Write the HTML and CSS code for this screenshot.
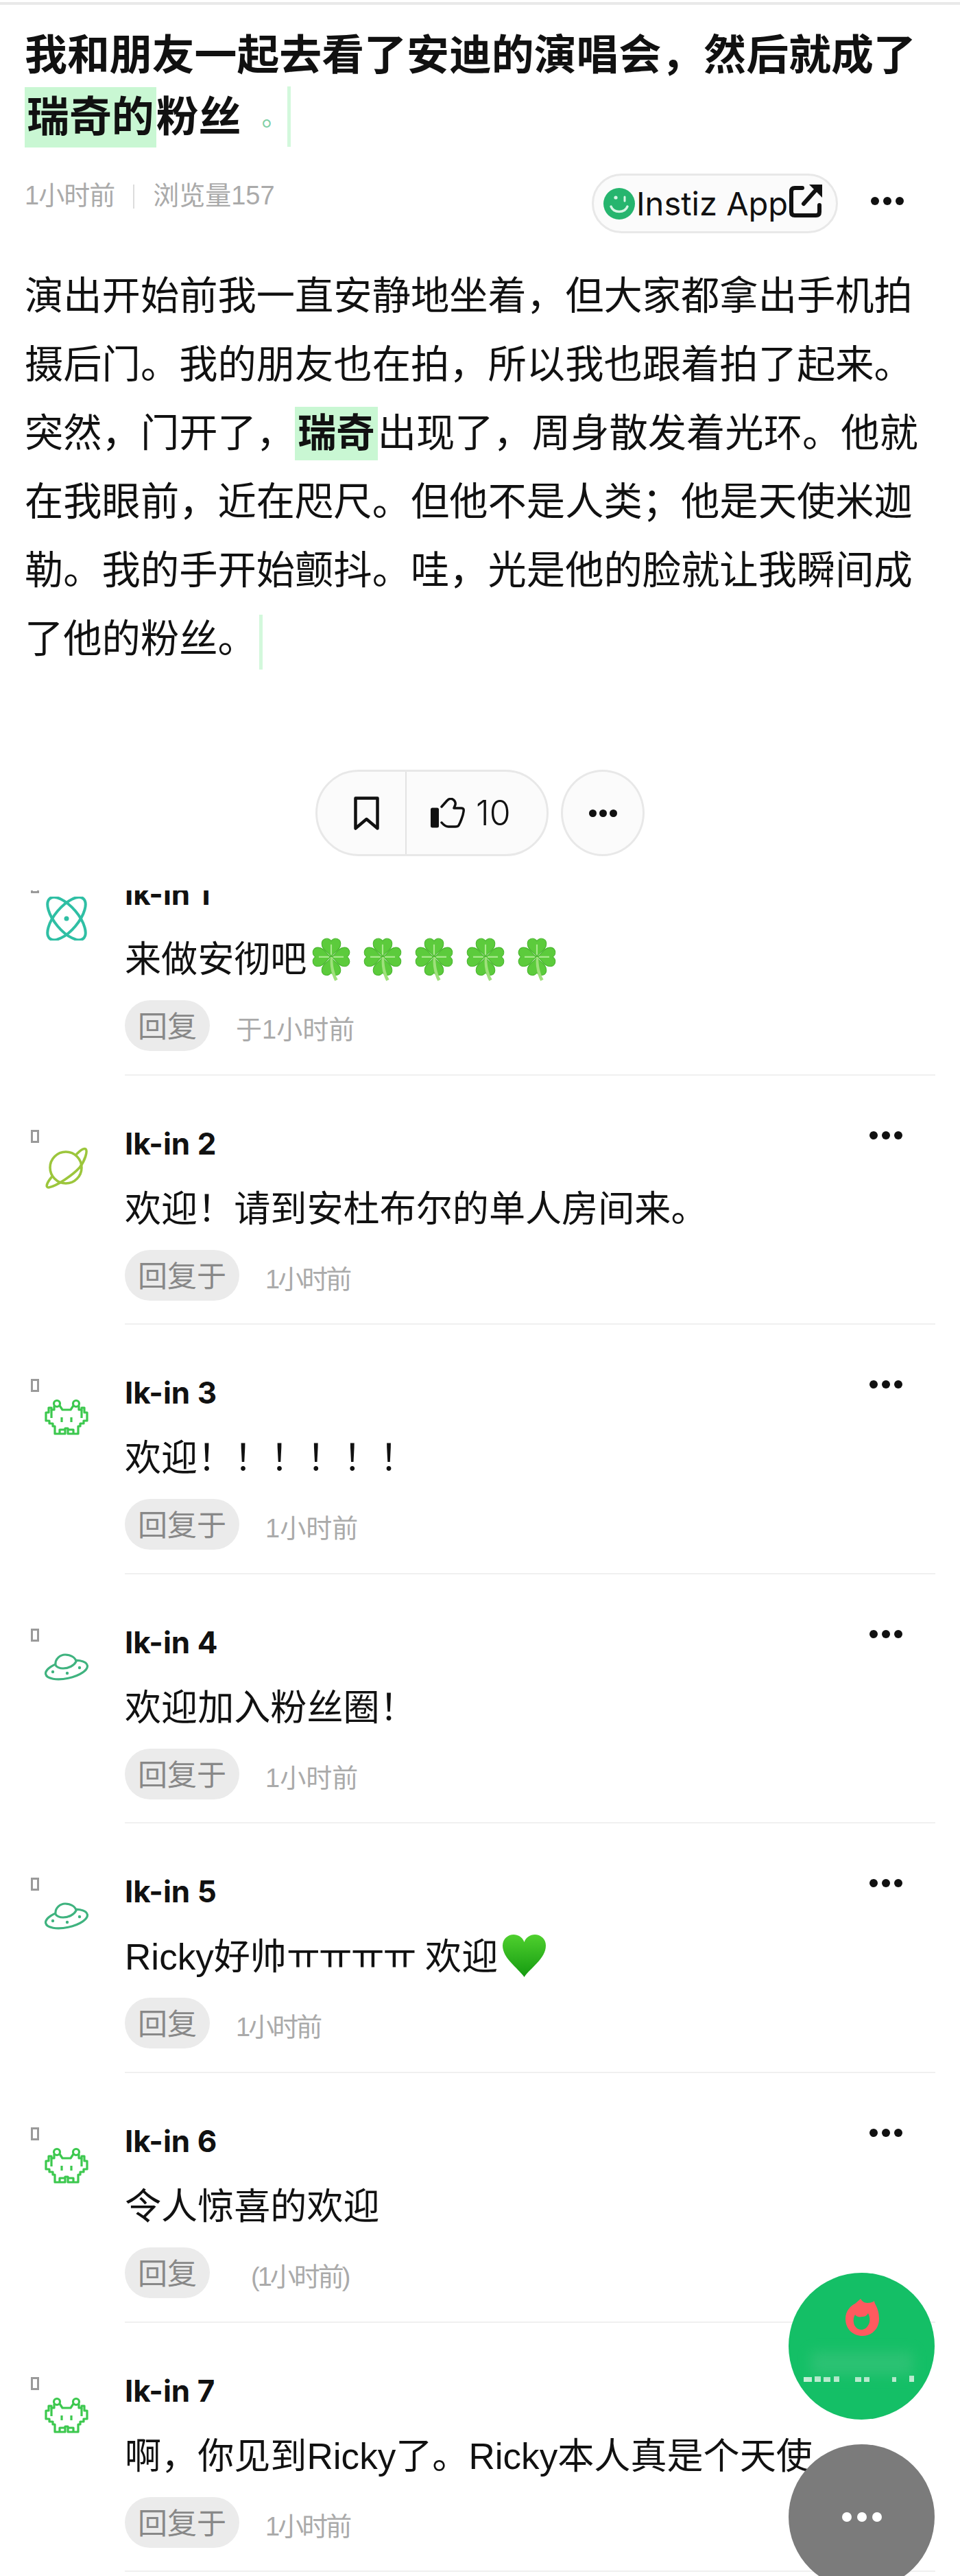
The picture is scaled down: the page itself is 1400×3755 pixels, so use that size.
FILE: index.html
```html
<!DOCTYPE html>
<html lang="zh-CN">
<head>
  <meta charset="UTF-8" />
  <title>我和朋友一起去看了安迪的演唱会</title>
  <link rel="stylesheet" href="styles.css">
</head>
<body>
  <!-- shared icons -->
  <svg class="defs" aria-hidden="true">
    <defs>
      <linearGradient id="heartGrad" x1="0" y1="0" x2="0" y2="1">
        <stop offset="0" stop-color="#4fd02e"/>
        <stop offset="1" stop-color="#149a10"/>
      </linearGradient>
      <path id="leaf" d="M30 31 C28 25 17 22 17 13 C17 6 25 3 30 9 C35 3 43 6 43 13 C43 22 32 25 30 31Z"/>
    </defs>
    <symbol id="clover" viewBox="0 0 60 65">
      <g fill="#5ccb3c" stroke="#48b52e" stroke-width="1">
        <use href="#leaf"/>
        <use href="#leaf" transform="rotate(90 30 31)"/>
        <use href="#leaf" transform="rotate(180 30 31)"/>
        <use href="#leaf" transform="rotate(270 30 31)"/>
      </g>
      <path d="M30 14 V28 M30 34 V44 M13 31 H27 M33 31 H47" stroke="#a9e88c" stroke-width="2"/>
      <path d="M29 31 C28 43 30 54 35 64 L39 62 C34 53 32 42 32 31Z" fill="#9fe07c"/>
    </symbol>
    <symbol id="atom" viewBox="0 0 64 64">
      <g fill="none" stroke="#2fbfa4" stroke-width="4">
        <ellipse cx="32" cy="32" rx="38" ry="17" transform="rotate(50 32 32)"/>
        <ellipse cx="32" cy="32" rx="38" ry="17" transform="rotate(-50 32 32)"/>
      </g>
      <circle cx="32" cy="32" r="3.5" fill="#2fbfa4"/>
    </symbol>
    <symbol id="planet" viewBox="0 0 64 64">
      <g fill="none" stroke="#9cc63c" stroke-width="3.6" stroke-linecap="round">
        <circle cx="31" cy="31" r="23"/>
        <path d="M11 44 C3 53 1 60 6 60 C18 58 42 41 51 31 C59 21 63 7 60 4 C57 2 52 6 47 11"/>
      </g>
    </symbol>
    <symbol id="invader" viewBox="0 0 64 64">
      <g transform="translate(0 6)" fill="none" stroke="#3cc84e" stroke-width="3.2" stroke-linejoin="round">
        <circle cx="18" cy="6" r="4.5"/>
        <circle cx="46" cy="6" r="4.5"/>
        <path d="M14 9 V15 H10 V12 H6 V19 H2 V31 H7 V35 H12 V39 H15 V50 H30 V42 H34 V50 H49 V39 H52 V35 H57 V31 H62 V19 H58 V12 H54 V15 H50 V9 M42 9 L38 15 H26 L22 9"/>
        <path d="M10 15 V27 M54 15 V27 M25 26 V33 M39 26 V33 M22 50 V44 H30 M42 50 V44 H34"/>
      </g>
    </symbol>
    <symbol id="ufo" viewBox="0 0 64 64">
      <g transform="translate(-1 12)" stroke="#3fb37f" stroke-width="3.2">
        <ellipse cx="33" cy="24" rx="31" ry="12.5" transform="rotate(-12 33 24)" fill="none"/>
        <path d="M17 17 C16 8 24 2 31 2 C39 2 46 6 47 12 C44 18 36 22 28 22 C23 22 18 20 17 17Z" fill="#fff"/>
      </g>
      <g transform="translate(-1 12)" fill="#3fb37f">
        <circle cx="13" cy="27" r="2.2"/>
        <circle cx="34" cy="29" r="2.2"/>
        <circle cx="52" cy="21" r="2.2"/>
      </g>
    </symbol>
  </svg>

  <div class="topline"></div>

  <div class="post">
    <h1 class="title">我和朋友一起去看了安迪的演唱会，然后就成了<span class="mark">瑞奇的</span>粉丝<span class="title-end">。</span></h1>

    <div class="meta">
      <div class="meta-info">
        <span class="meta-time">1小时前</span>
        <span class="meta-sep"></span>
        <span>浏览量157</span>
      </div>
      <div class="app-pill">
        <svg class="smiley" viewBox="0 0 46 46">
          <circle cx="23" cy="23" r="23" fill="#26b56e"/>
          <circle cx="18" cy="14" r="2.6" fill="#d6f5e4"/>
          <path d="M31 13 V19" stroke="#d6f5e4" stroke-width="3" stroke-linecap="round"/>
          <path d="M11 27 C15 37 31 37 35 27" fill="none" stroke="#d6f5e4" stroke-width="3.4" stroke-linecap="round"/>
        </svg>
        <span>Instiz App</span>
        <svg class="share" viewBox="0 0 48 50">
          <path d="M19 6 H8 Q3 6 3 11 V41 Q3 46 8 46 H39 Q44 46 44 41 V31" fill="none" stroke="#111" stroke-width="6" stroke-linecap="round"/>
          <path d="M21 29 L37 11" stroke="#111" stroke-width="6" stroke-linecap="round"/>
          <path d="M29 1 H48 V20 Z" fill="#111"/>
        </svg>
      </div>
      <div class="dots meta-dots"><i></i><i></i><i></i></div>
    </div>

    <p class="content">演出开始前我一直安静地坐着，但大家都拿出手机拍摄后门。我的朋友也在拍，所以我也跟着拍了起来。突然，门开了，<span class="mark-small">瑞奇</span>出现了，周身散发着光环。他就在我眼前，近在咫尺。但他不是人类；他是天使米迦勒。我的手开始颤抖。哇，光是他的脸就让我瞬间成了他的粉丝。<span class="caret"></span></p>

    <div class="actions">
      <div class="action-pill">
        <div class="act-save">
          <svg class="bookmark" viewBox="0 0 37 49">
            <path d="M2.5 2.5 H34.5 V46.5 L18.5 33 L2.5 46.5 Z" fill="none" stroke="#111" stroke-width="4.5" stroke-linejoin="round"/>
          </svg>
        </div>
        <div class="act-like">
          <svg class="thumb" viewBox="0 0 50 44">
            <rect x="0" y="14.5" width="12" height="29" rx="2.5" fill="#111"/>
            <path d="M16 13 L24 4 Q28 0 32 2 Q37 5 36 10 L34 15 H45 Q49 15 48 20 L47 25 L45 31 L43 36 L41 40 Q40 42 36 42 H26 Q21 42 16 36" fill="none" stroke="#111" stroke-width="3.5" stroke-linejoin="round" stroke-linecap="round"/>
          </svg>
          <span class="like-count">10</span>
        </div>
      </div>
      <div class="action-more"><div class="dots"><i></i><i></i><i></i></div></div>
    </div>
  </div>

  <div class="comments">
    <div class="comment-list">

      <div class="comment">
        <div class="c-side">
          <div class="tofu"></div>
          <svg class="c-icon"><use href="#atom"/></svg>
        </div>
        <div class="c-main">
          <div class="c-head"><span class="c-name">Ik-in 1</span><div class="dots c-dots"><i></i><i></i><i></i></div></div>
          <div class="c-text">来做安彻吧
            <svg class="clover first"><use href="#clover"/></svg>
            <svg class="clover"><use href="#clover"/></svg>
            <svg class="clover"><use href="#clover"/></svg>
            <svg class="clover"><use href="#clover"/></svg>
            <svg class="clover"><use href="#clover"/></svg>
          </div>
          <div class="c-foot"><span class="reply">回复</span><span class="time">于1小时前</span></div>
        </div>
      </div>

      <div class="comment">
        <div class="c-side">
          <div class="tofu"></div>
          <svg class="c-icon"><use href="#planet"/></svg>
        </div>
        <div class="c-main">
          <div class="c-head"><span class="c-name">Ik-in 2</span><div class="dots c-dots"><i></i><i></i><i></i></div></div>
          <div class="c-text">欢迎！请到安杜布尔的单人房间来。</div>
          <div class="c-foot"><span class="reply">回复于</span><span class="time tight">1小时前</span></div>
        </div>
      </div>

      <div class="comment">
        <div class="c-side">
          <div class="tofu"></div>
          <svg class="c-icon"><use href="#invader"/></svg>
        </div>
        <div class="c-main">
          <div class="c-head"><span class="c-name">Ik-in 3</span><div class="dots c-dots"><i></i><i></i><i></i></div></div>
          <div class="c-text">欢迎！！！！！！</div>
          <div class="c-foot"><span class="reply">回复于</span><span class="time">1小时前</span></div>
        </div>
      </div>

      <div class="comment">
        <div class="c-side">
          <div class="tofu"></div>
          <svg class="c-icon"><use href="#ufo"/></svg>
        </div>
        <div class="c-main">
          <div class="c-head"><span class="c-name">Ik-in 4</span><div class="dots c-dots"><i></i><i></i><i></i></div></div>
          <div class="c-text">欢迎加入粉丝圈！</div>
          <div class="c-foot"><span class="reply">回复于</span><span class="time">1小时前</span></div>
        </div>
      </div>

      <div class="comment">
        <div class="c-side">
          <div class="tofu"></div>
          <svg class="c-icon"><use href="#ufo"/></svg>
        </div>
        <div class="c-main">
          <div class="c-head"><span class="c-name">Ik-in 5</span><div class="dots c-dots"><i></i><i></i><i></i></div></div>
          <div class="c-text"><span>Ricky好帅<span class="jamo">ㅠㅠㅠㅠ</span> 欢迎</span>
            <svg class="heart" viewBox="0 0 65 63"><path d="M32.5 63 C24 50 1 36 1 17 C1 7 9 1 17 1 C24 1 30 5 32.5 12 C35 5 41 1 48 1 C56 1 64 7 64 17 C64 36 41 50 32.5 63Z" fill="url(#heartGrad)"/></svg>
          </div>
          <div class="c-foot"><span class="reply">回复</span><span class="time tight">1小时前</span></div>
        </div>
      </div>

      <div class="comment">
        <div class="c-side">
          <div class="tofu"></div>
          <svg class="c-icon"><use href="#invader"/></svg>
        </div>
        <div class="c-main">
          <div class="c-head"><span class="c-name">Ik-in 6</span><div class="dots c-dots"><i></i><i></i><i></i></div></div>
          <div class="c-text">令人惊喜的欢迎</div>
          <div class="c-foot"><span class="reply">回复</span><span class="time tight paren">(1小时前)</span></div>
        </div>
      </div>

      <div class="comment">
        <div class="c-side">
          <div class="tofu"></div>
          <svg class="c-icon"><use href="#invader"/></svg>
        </div>
        <div class="c-main">
          <div class="c-head"><span class="c-name">Ik-in 7</span><div class="dots c-dots"><i></i><i></i><i></i></div></div>
          <div class="c-text">啊，你见到Ricky了。Ricky本人真是个天使</div>
          <div class="c-foot"><span class="reply">回复于</span><span class="time tight">1小时前</span></div>
        </div>
      </div>

    </div>
  </div>

  <!-- floating buttons -->
  <div class="float-hot">
    <svg class="flame" viewBox="0 0 50 56">
      <path d="M22 1 C24 4 27 7 32 7 C36 7 40 6 42 4 C42 9 49 14 49 30 C49 45 38 55 25 55 C11 55 0 45 0 30 C0 18 8 11 14 8 Z" fill="#ff5a5f"/>
      <path d="M14 24 C16 27 20 28 24 27 C28 27 31 26 33 22 C36 28 36 34 34 38 C31 44 27 46 23 46 C18 46 13 42 12 36 C11 31 12 27 14 24Z" fill="#14bf66"/>
    </svg>
    <div class="smudge"></div>
    <svg class="smudge-text" viewBox="0 0 170 10">
      <g fill="#c8efd8">
        <rect x="0" y="2" width="12" height="7"/>
        <rect x="16" y="1" width="9" height="8"/>
        <rect x="29" y="2" width="10" height="7"/>
        <rect x="44" y="1" width="8" height="8"/>
        <rect x="75" y="2" width="9" height="7"/>
        <rect x="88" y="2" width="8" height="7"/>
        <rect x="129" y="2" width="6" height="7"/>
        <rect x="154" y="0" width="7" height="9"/>
      </g>
    </svg>
  </div>
  <div class="float-more"><div class="dots dots-white"><i></i><i></i><i></i></div></div>
</body>
</html>
```

FILE: styles.css
```css
html, body {
  margin: 0;
  padding: 0;
}

body {
  position: relative;
  width: 1400px;
  height: 3755px;
  overflow: hidden;
  background: #fff;
  color: #111;
  font-family: "Liberation Sans", "Noto Sans CJK SC", sans-serif;
}

.defs {
  position: absolute;
  width: 0;
  height: 0;
}

.topline {
  margin-top: 3px;
  height: 4px;
  background: #e9e9e9;
}

.post {
  padding: 29px 36px 0;
}

.title {
  margin: 0;
  font-size: 61.9px;
  line-height: 90px;
  font-weight: 700;
}

.mark {
  display: inline-block;
  padding: 0 3px;
  line-height: 88px;
  background: #c9f7d3;
}

.title-end {
  display: inline-block;
  margin-left: 30px;
  font-size: 38px;
  line-height: 88px;
  font-weight: 400;
  color: #7fcfa6;
  border-right: 5px solid #d3f8dc;
  vertical-align: top;
}

/* meta row */
.meta {
  display: flex;
  align-items: center;
  margin-top: 37px;
}

.meta-info {
  display: flex;
  align-items: center;
  align-self: flex-start;
  margin-top: 7px;
  font-size: 38px;
  line-height: 50px;
  color: #aaa;
}

.meta-time {
  letter-spacing: -1px;
}

.meta-sep {
  width: 2px;
  height: 35px;
  margin: 3px 27px 0;
  background: #ddd;
}

.app-pill {
  display: flex;
  align-items: center;
  box-sizing: border-box;
  width: 359px;
  height: 87px;
  margin-left: auto;
  padding-left: 14px;
  border: 3px solid #e8e8e8;
  border-radius: 44px;
  background: #fbfbfb;
  font-family: Inter, "Liberation Sans", sans-serif;
  font-size: 47px;
}

.smiley {
  width: 46px;
  height: 46px;
  margin-right: 2px;
}

.share {
  width: 48px;
  height: 50px;
  margin-left: 2px;
  margin-top: -8px;
}

.dots {
  display: flex;
  gap: 6px;
}

.dots i {
  display: block;
  width: 12px;
  height: 12px;
  border-radius: 50%;
  background: #111;
}

.meta-dots {
  margin: 0 46px 0 48px;
  padding-bottom: 8px;
}

/* article */
.content {
  margin: 42px 0 0;
  font-size: 56.3px;
  line-height: 100px;
  font-weight: 400;
}

.mark-small {
  display: inline-block;
  padding: 0 4px;
  line-height: 78px;
  font-weight: 700;
  background: #c9f7d3;
}

.caret {
  display: inline-block;
  width: 5px;
  height: 80px;
  margin-left: 4px;
  background: #d3f8dc;
  vertical-align: middle;
}

/* like / save row */
.actions {
  display: flex;
  justify-content: center;
  gap: 18px;
  margin-top: 140px;
}

.action-pill {
  display: flex;
  box-sizing: border-box;
  width: 340px;
  height: 126px;
  border: 3px solid #e8e8e8;
  border-radius: 63px;
  background: #fbfbfb;
}

.act-save {
  display: flex;
  align-items: center;
  justify-content: center;
  width: 128px;
  border-right: 2px solid #e3e3e3;
}

.bookmark {
  width: 37px;
  height: 49px;
  margin-left: 14px;
}

.act-like {
  display: flex;
  align-items: center;
  padding-left: 35px;
}

.thumb {
  width: 50px;
  height: 44px;
}

.like-count {
  margin-left: 16px;
  font-family: Inter, "Liberation Sans", sans-serif;
  font-size: 50px;
  font-weight: 300;
}

.action-more {
  display: flex;
  align-items: center;
  justify-content: center;
  box-sizing: border-box;
  width: 122px;
  height: 126px;
  border: 3px solid #e8e8e8;
  border-radius: 50%;
  background: #fbfbfb;
}

.action-more .dots {
  gap: 4px;
}

.action-more .dots i {
  width: 11px;
  height: 11px;
}

/* comments, first one scrolled under the top edge */
.comments {
  margin-top: 50px;
  overflow: hidden;
}

.comment-list {
  margin-top: -94px;
}

.comment {
  display: flex;
  padding-right: 36px;
}

.c-side {
  width: 182px;
  flex-shrink: 0;
}

.tofu {
  box-sizing: border-box;
  width: 12px;
  height: 19px;
  margin: 79px 0 0 45px;
  border: 3px solid #9a9a9a;
}

.c-icon {
  display: block;
  width: 64px;
  height: 64px;
  margin: 5px 0 0 65px;
  overflow: visible;
}

.c-main {
  flex: 1;
  padding: 74px 0 33.6px;
  border-bottom: 2px solid #f0f0f0;
}

.c-head {
  display: flex;
  justify-content: space-between;
  height: 50px;
}

.c-name {
  font-family: Inter, "Liberation Sans", sans-serif;
  font-size: 44px;
  line-height: 50px;
  font-weight: 700;
}

.c-dots {
  margin: 7px 48px 0 0;
}

.c-text {
  display: flex;
  align-items: center;
  height: 70px;
  margin-top: 36px;
  font-size: 53.1px;
  line-height: 70px;
  white-space: nowrap;
}

.jamo {
  letter-spacing: -2px;
}

.clover {
  width: 64px;
  height: 69px;
  margin-left: 11px;
  margin-top: -6px;
}

.clover.first {
  margin-left: 4px;
}

.heart {
  width: 65px;
  height: 63px;
  margin-left: 6px;
  margin-top: -6px;
}

.c-foot {
  display: flex;
  align-items: center;
  margin-top: 24px;
  height: 74px;
}

.reply {
  height: 74px;
  padding: 4px 19px 0;
  box-sizing: border-box;
  line-height: 70px;
  font-size: 43px;
  color: #888;
  background: #ebebeb;
  border-radius: 37px;
}

.time {
  margin-left: 38px;
  padding-top: 5px;
  font-size: 38px;
  color: #aaa;
}

.time.tight {
  letter-spacing: -3px;
}

.time.paren {
  margin-left: 60px;
}

/* floating buttons */
.float-hot {
  position: absolute;
  left: 1150px;
  top: 3313px;
  display: flex;
  flex-direction: column;
  align-items: center;
  box-sizing: border-box;
  width: 213px;
  height: 214px;
  padding-top: 37px;
  border-radius: 50%;
  background: #14bf66;
}

.flame {
  width: 50px;
  height: 56px;
  margin-left: 2px;
}

.smudge {
  width: 150px;
  height: 34px;
  margin-top: 22px;
  background: #3fc47e;
  filter: blur(9px);
  opacity: 0.55;
}

.smudge-text {
  width: 170px;
  height: 10px;
  margin-top: 1px;
}

.float-more {
  position: absolute;
  left: 1150px;
  top: 3563px;
  display: flex;
  align-items: center;
  justify-content: center;
  width: 213px;
  height: 212px;
  border-radius: 50%;
  background: #7b7b7b;
}

.dots-white {
  gap: 8px;
}

.dots-white i {
  width: 14px;
  height: 14px;
  background: #fff;
}
```
